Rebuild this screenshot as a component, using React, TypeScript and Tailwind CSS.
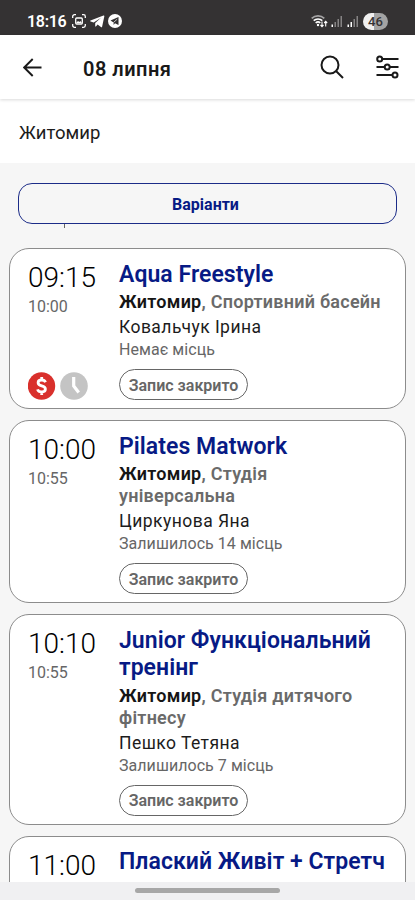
type Session = {
  start: string;
  end: string;
  title: string;
  city: string;
  room: string;
  coach?: string;
  places?: string;
  paid?: boolean;
};

const sessions: Session[] = [
  {
    start: '09:15',
    end: '10:00',
    title: 'Aqua Freestyle',
    city: 'Житомир',
    room: 'Спортивний басейн',
    coach: 'Ковальчук Ірина',
    places: 'Немає місць',
    paid: true,
  },
  {
    start: '10:00',
    end: '10:55',
    title: 'Pilates Matwork',
    city: 'Житомир',
    room: 'Студія універсальна',
    coach: 'Циркунова Яна',
    places: 'Залишилось 14 місць',
  },
  {
    start: '10:10',
    end: '10:55',
    title: 'Junior Функціональний тренінг',
    city: 'Житомир',
    room: 'Студія дитячого фітнесу',
    coach: 'Пешко Тетяна',
    places: 'Залишилось 7 місць',
  },
  {
    start: '11:00',
    end: '11:55',
    title: 'Плаский Живіт + Стретч',
    city: 'Житомир',
    room: 'Студія',
  },
];

function Signal({ strong }: { strong?: boolean }) {
  return (
    <svg className="h-3 w-3" viewBox="0 0 12 12">
      <rect x="0.5" y="9.5" width="1.5" height="2.5" fill="#fff" />
      <rect x="3.5" y="7" width="1.5" height="5" fill={strong ? '#fff' : '#858384'} />
      <rect x="6.5" y="4" width="1.5" height="8" fill="#858384" />
      <rect x="9.5" y="1" width="1.5" height="11" fill="#858384" />
    </svg>
  );
}

function StatusBar() {
  return (
    <div className="flex h-[35px] shrink-0 items-center bg-[#343233] pl-[27px] pr-[27px] pt-[7px] text-white">
      <span className="w-[38px] whitespace-nowrap pt-[2px] text-[16px] font-semibold leading-none tracking-[-0.3px]">
        18:16
      </span>
      <svg className="ml-[7px] h-[14px] w-[14px]" viewBox="0 0 14 14" fill="none" stroke="#fff" strokeWidth="1.3">
        <path d="M.7 4V2.5A1.8 1.8 0 0 1 2.5.7H4M10 .7h1.5a1.8 1.8 0 0 1 1.8 1.8V4M13.3 10v1.5a1.8 1.8 0 0 1-1.8 1.8H10M4 13.3H2.5A1.8 1.8 0 0 1 .7 11.5V10" />
        <rect x="3.7" y="4" width="6.6" height="6" rx="1" />
        <path d="M4 9l2-2 1.3 1 1-1L10 9z" fill="#fff" stroke="none" />
      </svg>
      <svg className="ml-[4px] h-[13px] w-[15px]" viewBox="0 0 15 13" fill="#fff">
        <path d="M.5 5.6L13.5.6q1-.3.8.8l-2.2 10.3q-.3 1-1.2.4L7.6 9.6l-1.7 1.8q-.7.5-.7-.5V8L11 2.8 3.7 7.4.6 6.4q-.9-.4-.1-.8z" />
      </svg>
      <svg className="ml-[3px] h-[14px] w-[14px]" viewBox="0 0 14 14">
        <circle cx="7" cy="7" r="7" fill="#fff" />
        <path d="M2.5 6.6L10.5 3v8L7 9.3 5.6 11V8.4z" fill="#343233" />
        <path d="M5.6 8.4L9.2 5.2" stroke="#fff" strokeWidth=".7" />
      </svg>
      <div className="ml-auto flex items-center">
        <svg className="mr-[3px] h-[14px] w-[17px]" viewBox="0 0 17 14" fill="none" stroke="#fff" strokeWidth="1.6">
          <path d="M.7 4.4a9 9 0 0 1 12.6 0" stroke="#a5a4a5" />
          <path d="M2.7 6.7a6.2 6.2 0 0 1 8.6 0" />
          <path d="M4.7 9a3.4 3.4 0 0 1 4.6 0" />
          <circle cx="7" cy="11" r="1.2" fill="#fff" stroke="none" />
          <path d="M11 7.5v5M9.5 11l1.5 1.6 1.5-1.6M14.7 12.5v-5M13.2 9l1.5-1.6L16.2 9" strokeWidth="1.1" />
        </svg>
        <Signal />
        <span className="w-[4px]" />
        <Signal strong />
        <span className="ml-[4px] flex h-[17px] w-[25px] items-center justify-center rounded-full bg-linear-to-r from-[#f0f0f0] from-45% to-[#a3a3a3] to-45% text-[13px] font-medium leading-none text-[#343233]">
          46
        </span>
      </div>
    </div>
  );
}

function Header() {
  return (
    <header className="relative flex h-[64px] shrink-0 items-center bg-white pl-[23px] pr-[16px] text-[#191919] shadow-[0_1px_3px_rgba(0,0,0,0.15)]">
      <svg className="h-[19px] w-[19px]" viewBox="0 0 19 19" fill="none" stroke="currentColor" strokeWidth="1.9">
        <path d="M18.5 9.5H1.3M9.7 1L1.2 9.5l8.5 8.5" />
      </svg>
      <h1 className="ml-[41px] pt-[3px] text-[20px] font-semibold leading-none tracking-[0.5px]">08 липня</h1>
      <svg className="ml-auto h-[24px] w-[24px]" viewBox="0 0 24 24" fill="none" stroke="currentColor" strokeWidth="2">
        <circle cx="10" cy="10" r="8.5" />
        <path d="M16 16l7 7" />
      </svg>
      <svg className="ml-[31px] h-[24px] w-[24px]" viewBox="0 0 24 24" fill="none" stroke="currentColor" strokeWidth="2">
        <path d="M7 4h16.5M1.5 12h8M15 12h8.5M1.5 20h16" />
        <circle cx="4.7" cy="4" r="2.5" />
        <circle cx="12.2" cy="12" r="2.5" />
        <circle cx="20" cy="20" r="2.5" />
      </svg>
    </header>
  );
}

function SessionCard({ session }: { session: Session }) {
  return (
    <article className="flex shrink-0 rounded-[20px] border border-[#8c8c8c] bg-white pb-[8px] pl-[18px] pr-[14px] pt-[11px]">
      <div className="flex w-[91px] shrink-0 flex-col">
        <div className="pt-px text-[28px] font-light leading-[34px] text-black">{session.start}</div>
        <div className="mt-px text-[16px] leading-[22px] text-[#666]">{session.end}</div>
        {session.paid && (
          <div className="mt-auto flex gap-[4px]">
            <svg className="h-[28px] w-[28px]" viewBox="0 0 28 28">
              <circle cx="13.5" cy="14" r="13.7" fill="#d9302c" />
              <path
                d="M17.5 10.2C16.8 8.6 15.5 8 13.700 8c-2.100 0-3.600 1-3.600 2.800 0 4 7.300 2.200 7.300 6.200 0 1.900-1.600 3-3.800 3-2.100 0-3.500-.8-4.100-2.600M13.700 5v3M13.700 20v3"
                fill="none"
                stroke="#fff"
                strokeWidth="2.8"
              />
            </svg>
            <svg className="h-[28px] w-[28px]" viewBox="0 0 28 28">
              <circle cx="14" cy="14" r="13.8" fill="#c4c4c4" />
              <path d="M13.7 5V14l5 6.5" fill="none" stroke="#fff" strokeWidth="3.2" />
            </svg>
          </div>
        )}
      </div>
      <div className="min-w-0">
        <h2 className="pt-[0.5px] text-[23px] font-semibold leading-[27.5px] tracking-[0.05px] text-[#071a85]">
          {session.title}
        </h2>
        <p className="mt-[3px] max-w-[264px] text-[18px] font-semibold leading-[22px] tracking-[0.25px] text-[#6a6a6a]">
          <span className="text-[#151515]">{session.city}</span>, {session.room}
        </p>
        <p className="mt-[3px] text-[17.5px] leading-[22px] tracking-[0.45px] text-[#1c1c1c]">{session.coach}</p>
        <p className="mt-[2px] text-[16px] leading-[20px] tracking-[0.05px] text-[#666]">{session.places}</p>
        <button className="mt-[9px] block h-[31px] w-[129px] whitespace-nowrap rounded-full border border-[#666] pt-[2px] text-[16px] font-semibold leading-none text-[#666]">
          Запис закрито
        </button>
      </div>
    </article>
  );
}

export default function App() {
  return (
    <div className="flex h-[900px] w-[415px] flex-col overflow-hidden bg-[#f6f6f6] font-[Roboto,sans-serif]">
      <StatusBar />
      <Header />
      <div className="flex h-[64px] shrink-0 items-center bg-white pl-[19px] pt-[5px] text-[18.5px] text-[#1c1c1c]">
        Житомир
      </div>
      <main className="flex min-h-0 flex-1 flex-col overflow-hidden px-[9px] pt-[20px]">
        <button className="mx-[9px] h-[41px] shrink-0 rounded-[14px] border border-[#1c2c88] pr-[4px] pt-[2px] text-[16px] font-bold leading-none text-[#071a85]">
          Варіанти
        </button>
        <div className="ml-[55px] h-[4px] w-px shrink-0 bg-[#666]" />
        <div className="mt-[20px] flex flex-col gap-[11px]">
          {sessions.map(session => (
            <SessionCard key={session.start} session={session} />
          ))}
        </div>
      </main>
      <div className="flex h-[18px] shrink-0 justify-center bg-[#f0f0f2] pt-[6px]">
        <div className="h-[5px] w-[145px] rounded-full bg-[#a7a7a7]" />
      </div>
    </div>
  );
}
